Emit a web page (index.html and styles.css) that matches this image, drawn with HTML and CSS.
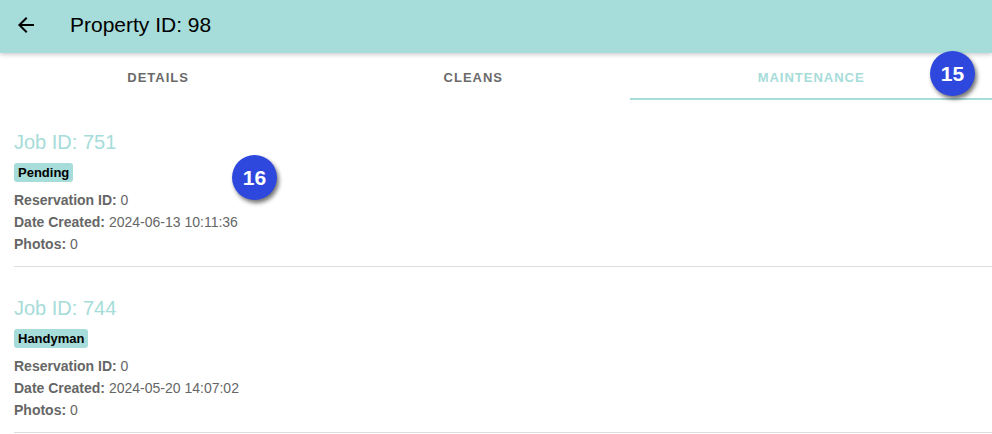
FILE: index.html
```html
<!DOCTYPE html>
<html>
<head>
<meta charset="utf-8">
<link rel="stylesheet" href="styles.css">
</head>
<body>
<div class="app">
  <header class="appbar">
    <svg class="back" width="24" height="24" viewBox="0 0 24 24"><path d="M20 11H7.83l5.59-5.59L12 4l-8 8 8 8 1.41-1.41L7.83 13H20v-2z" fill="#000"/></svg>
    <h1 class="title">Property ID: 98</h1>
  </header>
  <nav class="tabs">
    <div class="tab">DETAILS</div>
    <div class="tab">CLEANS</div>
    <div class="tab active">MAINTENANCE</div>
  </nav>
  <div class="list">
    <div class="job">
      <div class="job-title">Job ID: 751</div>
      <span class="chip">Pending</span>
      <div class="rows">
        <div class="row"><b>Reservation ID:</b> 0</div>
        <div class="row"><b>Date Created:</b> 2024-06-13 10:11:36</div>
        <div class="row"><b>Photos:</b> 0</div>
      </div>
    </div>
    <div class="job">
      <div class="job-title">Job ID: 744</div>
      <span class="chip">Handyman</span>
      <div class="rows">
        <div class="row"><b>Reservation ID:</b> 0</div>
        <div class="row"><b>Date Created:</b> 2024-05-20 14:07:02</div>
        <div class="row"><b>Photos:</b> 0</div>
      </div>
    </div>
  </div>
  <div class="marker marker-15">15</div>
  <div class="marker marker-16">16</div>
</div>
</body>
</html>
```
FILE: styles.css
```css
* { box-sizing: border-box; }
html, body { margin: 0; padding: 0; background: #fff; }
body { font-family: "Liberation Sans", Arial, sans-serif; width: 992px; height: 434px; overflow: hidden; }
.app { position: relative; width: 992px; height: 434px; }
.appbar {
  height: 53px;
  background: #a6dcd9;
  display: flex;
  align-items: center;
  padding-left: 14px;
  box-shadow: 0 2px 4px rgba(0,0,0,0.18);
  position: relative;
  z-index: 1;
}
.back { margin-top: -4px; }
.title {
  margin: -3px 0 0 32px;
  font-size: 21px;
  font-weight: 500;
  color: #000;
}
.tabs {
  display: flex;
  height: 47px;
}
.tab {
  flex: 1 1 auto;
  display: flex;
  align-items: center;
  justify-content: center;
  font-size: 13px;
  font-weight: 600;
  letter-spacing: 1px;
  color: #6a6a6a;
  border-bottom: 2px solid transparent;
  padding-top: 3px;
}
.tab.active { color: #a6dcd9; border-bottom-color: #a6dcd9; }
.list { padding-left: 14px; margin-top: 1px; }
.job {
  padding: 29px 0 11px;
  border-bottom: 1px solid #dddddd;
}
.job-title {
  font-size: 20px;
  line-height: 24px;
  color: #a6dcd9;
}
.chip {
  display: inline-block;
  margin-top: 9px;
  background: #a6dcd9;
  color: #000;
  font-weight: 700;
  font-size: 13px;
  line-height: 19px;
  padding: 0 4px;
  border-radius: 3px;
}
.rows { margin-top: 7px; }
.row {
  font-size: 14px;
  line-height: 22px;
  color: #666;
}
.row b { font-weight: 700; }
.marker {
  position: absolute;
  width: 45px;
  height: 45px;
  border-radius: 50%;
  background: #2e48de;
  color: #fff;
  font-weight: 700;
  font-size: 21px;
  display: flex;
  align-items: center;
  justify-content: center;
  box-shadow: 2px 3px 4px rgba(0,0,0,0.55);
  z-index: 2;
}
.marker-15 { left: 930px; top: 51px; }
.marker-16 { left: 232px; top: 155px; }
```
